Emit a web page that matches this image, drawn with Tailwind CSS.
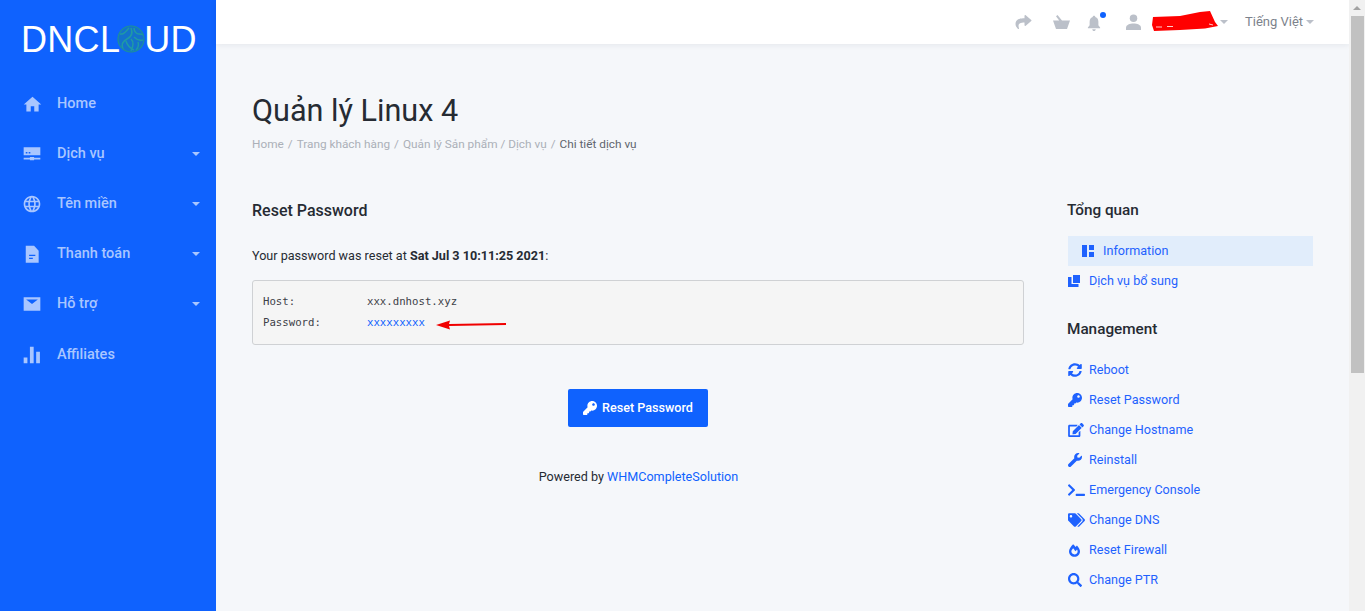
<!DOCTYPE html>
<html lang="vi"><head><meta charset="utf-8"><script src="https://cdn.jsdelivr.net/npm/@tailwindcss/browser@4"></script></head>
<body class="m-0 overflow-hidden">
<div class="flex h-[611px] w-[1365px] overflow-hidden bg-[#f5f7fa] font-['Roboto',sans-serif] text-[12.6px] text-[#262b33]">
  <aside class="w-[216px] shrink-0 bg-[#0f62fe] text-[#a9c6ff]">
    <div class="h-[79px] flex items-start pl-[21px] pt-[19px] text-white text-[36px] leading-[42px] tracking-[0.3px] font-['Liberation_Sans',sans-serif]">
      <span>DNCL</span>
      <svg class="w-[28px] h-[28px] mt-[6px] -ml-[3px] -mr-[1px] shrink-0" viewBox="0 0 28 28" fill="none"><circle cx="14" cy="14" r="13.5" fill="#1472cc"/><path d="M3 9c4 1 6-3 9-6M6 24c-2-5 0-8 4-10s6-6 4-11M14 14c3 3 2 8 0 12M17 3c0 4 3 6 5 6s3 0 4 1M17 12c3 3 6 4 9 3M9 16c1 4 4 7 8 9M21 17c1 3 0 6-2 8" stroke="#1f9aa5" stroke-width="1.5"/><circle cx="14" cy="14" r="13" stroke="#1c8f9f" stroke-width="1.2"/></svg>
      <span>UD</span>
    </div>
    <nav class="text-[14.5px] font-medium">
      <a class="flex items-center h-[50px] pl-[22px] pr-[16px]"><svg class="w-[21px] h-[21px] mr-[14px]" viewBox="0 0 24 24" fill="currentColor"><path d="M10 20v-6h4v6h5v-8h3L12 3 2 12h3v8z"/></svg><span class="flex-1">Home</span></a>
      <a class="flex items-center h-[50px] pl-[22px] pr-[16px]"><svg class="w-[20px] h-[20px] mr-[15px]" viewBox="0 0 24 24" fill="currentColor"><path fill-rule="evenodd" d="M2 4h20v9.500H2zM4.500 9.500v2h2v-2zM8 9.500v2h2v-2zM2 16.500h7.500v-1h5v1H22v2h-7.500v1h-5v-1H2z"/></svg><span class="flex-1">Dịch vụ</span><svg class="w-[8px] h-[4px]" viewBox="0 0 8 4" fill="currentColor"><path d="M0 0h8L4 4z"/></svg></a>
      <a class="flex items-center h-[50px] pl-[22px] pr-[16px]"><svg class="w-[20px] h-[20px] mr-[15px]" viewBox="0 0 24 24" fill="currentColor"><path d="M11.990 2C6.470 2 2 6.480 2 12s4.470 10 9.990 10C17.520 22 22 17.520 22 12S17.520 2 11.990 2zm6.930 6h-2.950c-.32-1.250-.78-2.450-1.380-3.560 1.840.63 3.370 1.910 4.330 3.560zM12 4.040c.83 1.200 1.480 2.530 1.910 3.960h-3.820c.43-1.430 1.080-2.760 1.910-3.960zM4.260 14C4.100 13.360 4 12.690 4 12s.1-1.360.26-2h3.380c-.08.66-.14 1.320-.14 2 0 .68.06 1.340.14 2H4.260zm.82 2h2.950c.32 1.250.78 2.450 1.380 3.560-1.840-.63-3.370-1.900-4.330-3.560zm2.950-8H5.080c.96-1.660 2.490-2.930 4.330-3.560C8.810 5.550 8.350 6.750 8.030 8zM12 19.960c-.83-1.200-1.480-2.530-1.910-3.960h3.820c-.43 1.430-1.080 2.760-1.910 3.960zM14.340 14H9.660c-.09-.66-.16-1.320-.16-2 0-.68.07-1.350.16-2h4.680c.09.65.16 1.320.16 2 0 .68-.07 1.340-.16 2zm.25 5.560c.6-1.110 1.060-2.310 1.380-3.560h2.950c-.96 1.650-2.490 2.930-4.330 3.560zM16.360 14c.08-.66.14-1.320.14-2 0-.68-.06-1.340-.14-2h3.380c.16.64.26 1.310.26 2s-.1 1.360-.26 2h-3.380z"/></svg><span class="flex-1">Tên miền</span><svg class="w-[8px] h-[4px]" viewBox="0 0 8 4" fill="currentColor"><path d="M0 0h8L4 4z"/></svg></a>
      <a class="flex items-center h-[50px] pl-[22px] pr-[16px]"><svg class="w-[20px] h-[20px] mr-[15px]" viewBox="0 0 24 24" fill="currentColor"><path fill-rule="evenodd" d="M4.500 2h10l5.500 6v14.500H4.500zM8.500 13v1.500h7.500V13zM8.500 16.500V18h4.500v-1.500z"/></svg><span class="flex-1">Thanh toán</span><svg class="w-[8px] h-[4px]" viewBox="0 0 8 4" fill="currentColor"><path d="M0 0h8L4 4z"/></svg></a>
      <a class="flex items-center h-[50px] pl-[22px] pr-[16px]"><svg class="w-[20px] h-[20px] mr-[15px]" viewBox="0 0 24 24" fill="currentColor"><path fill-rule="evenodd" d="M2 4h20v16H2zM5 6.500 12 12l7-5.500z"/></svg><span class="flex-1">Hỗ trợ</span><svg class="w-[8px] h-[4px]" viewBox="0 0 8 4" fill="currentColor"><path d="M0 0h8L4 4z"/></svg></a>
      <a class="flex items-center h-[51px] pt-[1px] pl-[22px] pr-[16px]"><svg class="w-[20px] h-[20px] mr-[15px]" viewBox="0 0 24 24" fill="currentColor"><path d="M2 15h4.500v7H2zM9.500 2H14v20H9.500zM17 8h4.500v14H17z"/></svg><span class="flex-1">Affiliates</span></a>
    </nav>
  </aside>
  <div class="w-[1133px] shrink-0 flex flex-col">
    <header class="h-[44px] shrink-0 bg-white shadow-[0_1px_6px_rgba(30,40,60,0.08)] flex items-center text-[#bbc0c9] pl-[799px] text-[13px]">
      <svg class="w-[17px] h-[16px] mr-[21px]" viewBox="0 0 512 512" fill="currentColor"><path d="M503.700 189.800 327.700 37.900C312.300 24.500 288 35.300 288 56v80.100C127.400 137.900 0 170.100 0 322.300c0 61.400 39.600 122.300 83.300 154.100 13.700 9.900 33.100-2.500 28.100-18.600C66.100 312.800 132.900 274.300 288 272.100V360c0 20.700 24.300 31.500 39.700 18.200l176-152c11.100-9.600 11.100-26.800 0-36.400z"/></svg>
      <svg class="w-[17px] h-[16px] mr-[17px]" viewBox="0 0 17 16" fill="currentColor"><path d="M0 6.500h6.200L3 2.200 4.500 1 9 6.500h8L14 15H3z"/></svg>
      <div class="relative mr-[25px] mt-[2px]"><svg class="w-[14px] h-[17px] block" viewBox="0 0 16 18" fill="currentColor"><path d="M8 0c1 0 1.500.7 1.500 1.500C12 2.200 13 4.500 13 7v4l2 2.500v1H1v-1L3 11V7c0-2.500 1-4.800 3.500-5.500C6.500.7 7 0 8 0zM6 15.500h4c0 1.300-1 2-2 2s-2-.7-2-2z"/></svg><span class="absolute -top-[3px] right-[-5px] w-[6px] h-[6px] rounded-full bg-[#0f62fe]"></span></div>
      <svg class="w-[15px] h-[16px] mr-[11px]" viewBox="0 0 16 17" fill="currentColor"><circle cx="8" cy="4.500" r="4"/><path d="M0 17v-2.500C0 11.500 4 10 8 10s8 1.500 8 4.500V17z"/></svg>
      <svg class="w-[66px] h-[23px] mr-[2px]" viewBox="0 0 66 23"><path d="M1 6 28 5 48 1 58 0 63 11 66 15 53 17.500 28 19 2 20 0 14z" fill="#ff0000"/><path d="M4 16h6M15 15.500h6M57 13l4 1" stroke="#fff" stroke-width=".8"/></svg>
      <svg class="w-[8px] h-[4px] mr-[17px]" viewBox="0 0 8 4" fill="currentColor"><path d="M0 0h8L4 4z"/></svg>
      <span class="text-[#7c828c] mr-[3px]">Tiếng Việt</span>
      <svg class="w-[8px] h-[4px]" viewBox="0 0 8 4" fill="currentColor"><path d="M0 0h8L4 4z"/></svg>
    </header>
    <main class="px-[36px] flex-1">
      <h1 class="mt-[49px] text-[30.6px] leading-[36px] font-normal text-[#262b33]">Quản lý Linux 4</h1>
      <div class="mt-[7px] leading-[16px] text-[11.8px] text-[#abb0b8] flex"><span>Home</span><span class="mx-[4px]">/</span><span>Trang khách hàng</span><span class="mx-[4px]">/</span><span>Quản lý Sản phẩm / Dịch vụ</span><span class="mx-[4px]">/</span><span class="text-[#5f656e]">Chi tiết dịch vụ</span></div>
      <div class="flex mt-[48px]">
        <section class="w-[772px] shrink-0 pt-[1px]">
          <h2 class="text-[16px] leading-[20px] font-medium">Reset Password</h2>
          <p class="mt-[25px] leading-[20px]">Your password was reset at <b class="font-bold">Sat Jul 3 10:11:25 2021</b>:</p>
          <div class="mt-[14px] h-[65px] rounded-[3px] border border-[#cfd1d4] bg-[#f5f5f5] pl-[10px] pt-[10px] font-['DejaVu_Sans_Mono',monospace] text-[10.7px] leading-[21px] text-[#3d4148]">
            <div class="flex"><span class="w-[104px]">Host:</span><span>xxx.dnhost.xyz</span></div>
            <div class="flex items-center"><span class="w-[104px]">Password:</span><span class="text-[#0f62fe]">xxxxxxxxx</span>
              <svg class="w-[71px] h-[10px] ml-[11px] mt-[5px]" viewBox="0 0 71 10"><path d="M0 5 14 .5 13 4 70 3V5L13 6l1 3.500z" fill="#f00000"/></svg></div>
          </div>
          <div class="mt-[44px] flex justify-center"><button class="w-[140px] h-[38px] bg-[#0f62fe] text-white rounded-[2px] font-medium flex items-center justify-center"><svg class="w-[14px] h-[14px] mr-[5px]" viewBox="0 0 512 512" fill="currentColor"><path d="M512 176.001C512 273.203 433.202 352 336 352c-11.220 0-22.190-1.062-32.827-3.069l-24.012 27.014A23.999 23.999 0 0 1 261.223 384H224v40c0 13.255-10.745 24-24 24h-40v40c0 13.255-10.745 24-24 24H24c-13.255 0-24-10.745-24-24v-78.059c0-6.365 2.529-12.470 7.029-16.971l161.802-161.802C163.108 213.814 160 195.271 160 176 160 78.798 238.797.001 335.999 0 433.488-.001 512 78.511 512 176.001zM336 128c0 26.510 21.490 48 48 48s48-21.490 48-48-21.490-48-48-48-48 21.490-48 48z"/></svg>Reset Password</button></div>
          <p class="mt-[40px] text-center leading-[20px] pl-[1px]">Powered by <span class="text-[#0f62fe]">WHMCompleteSolution</span></p>
        </section>
        <aside class="ml-[43px] w-[246px] shrink-0 text-[#1f62fe]">
          <h3 class="text-[15.3px] leading-[20px] font-medium text-[#262b33]">Tổng quan</h3>
          <a class="mt-[16px] ml-[1px] h-[30px] bg-[#e1edfb] flex items-center pl-[14px]"><svg class="w-[12px] h-[12px] mr-[9px]" viewBox="0 0 12 12" fill="currentColor"><path d="M0 0h5v12H0zM7 0h5v5H7zM7 7h5v5H7z"/></svg>Information</a>
          <a class="h-[30px] flex items-center"><svg class="w-[12px] h-[12px] mr-[9px] ml-[1px]" viewBox="0 0 12 12" fill="currentColor"><path d="M5 0h7v8H5zM0 2h3.500v7h7V12H0z"/></svg>Dịch vụ bổ sung</a>
          <h3 class="mt-[23px] text-[15.3px] leading-[20px] font-medium text-[#262b33]">Management</h3>
          <div class="mt-[16px]">
            <a class="h-[30px] flex items-center"><span class="w-[22px] shrink-0 pl-[1px]"><svg class="w-[14px] h-[14px] block" viewBox="0 0 512 512" fill="currentColor"><path d="M370.720 133.280C339.458 104.008 298.888 87.962 255.848 88c-77.458.068-144.328 53.178-162.791 126.850-1.344 5.363-6.122 9.150-11.651 9.150H24.103c-7.498 0-13.194-6.807-11.807-14.176C33.933 94.924 134.813 8 256 8c66.448 0 126.791 26.136 171.315 68.685L463.030 40.970C478.149 25.851 504 36.559 504 57.941V192c0 13.255-10.745 24-24 24H345.941c-21.382 0-32.090-25.851-16.971-40.971l41.750-41.749zM32 296h134.059c21.382 0 32.090 25.851 16.971 40.971l-41.750 41.750c31.262 29.273 71.835 45.319 114.876 45.280 77.418-.07 144.315-53.144 162.787-126.849 1.344-5.363 6.122-9.150 11.651-9.150h57.304c7.498 0 13.194 6.807 11.807 14.176C478.067 417.076 377.187 504 256 504c-66.448 0-126.791-26.136-171.315-68.685L48.970 471.030C33.851 486.149 8 475.441 8 454.059V320c0-13.255 10.745-24 24-24z"/></svg></span>Reboot</a>
            <a class="h-[30px] flex items-center"><span class="w-[22px] shrink-0 pl-[1px]"><svg class="w-[14px] h-[14px] block" viewBox="0 0 512 512" fill="currentColor"><path d="M512 176.001C512 273.203 433.202 352 336 352c-11.220 0-22.190-1.062-32.827-3.069l-24.012 27.014A23.999 23.999 0 0 1 261.223 384H224v40c0 13.255-10.745 24-24 24h-40v40c0 13.255-10.745 24-24 24H24c-13.255 0-24-10.745-24-24v-78.059c0-6.365 2.529-12.470 7.029-16.971l161.802-161.802C163.108 213.814 160 195.271 160 176 160 78.798 238.797.001 335.999 0 433.488-.001 512 78.511 512 176.001zM336 128c0 26.510 21.490 48 48 48s48-21.490 48-48-21.490-48-48-48-48 21.490-48 48z"/></svg></span>Reset Password</a>
            <a class="h-[30px] flex items-center"><span class="w-[22px] shrink-0 pl-[1px]"><svg class="w-[16px] h-[14px] block" viewBox="0 0 576 512" fill="currentColor"><path d="M402.600 83.200l90.200 90.200c3.800 3.800 3.800 10 0 13.800L274.400 405.600l-92.800 10.300c-12.400 1.400-22.900-9.100-21.500-21.500l10.300-92.800L388.800 83.200c3.800-3.800 10-3.800 13.800 0zm162-22.900l-48.800-48.800c-15.200-15.200-39.900-15.200-55.200 0l-35.400 35.400c-3.800 3.800-3.800 10 0 13.800l90.200 90.200c3.800 3.800 10 3.800 13.800 0l35.400-35.400c15.200-15.300 15.200-40 0-55.200zM384 346.200V448H64V128h229.800c3.200 0 6.200-1.300 8.500-3.500l40-40c7.600-7.600 2.200-20.500-8.500-20.500H48C21.500 64 0 85.500 0 112v352c0 26.500 21.500 48 48 48h352c26.500 0 48-21.500 48-48V306.200c0-10.700-12.900-16-20.500-8.500l-40 40c-2.200 2.300-3.500 5.300-3.500 8.500z"/></svg></span>Change Hostname</a>
            <a class="h-[30px] flex items-center"><span class="w-[22px] shrink-0 pl-[1px]"><svg class="w-[14px] h-[14px] block" viewBox="0 0 512 512" fill="currentColor"><path d="M507.730 109.100c-2.240-9.030-13.540-12.090-20.120-5.510l-74.360 74.360-67.880-11.310-11.310-67.880 74.360-74.360c6.620-6.620 3.430-17.900-5.660-20.160-47.380-11.740-99.550.91-136.580 37.930-39.640 39.640-50.550 97.100-34.050 147.200L18.740 402.760c-24.990 24.990-24.990 65.510 0 90.500 24.990 24.990 65.510 24.990 90.500 0l213.210-213.210c50.120 16.710 107.470 5.680 147.370-34.220 37.070-37.070 49.700-89.320 37.910-136.730z"/></svg></span>Reinstall</a>
            <a class="h-[30px] flex items-center"><span class="w-[22px] shrink-0 pl-[1px]"><svg class="w-[17px] h-[14px] block" viewBox="0 0 640 512" fill="currentColor"><path d="M257.981 272.971L63.638 467.314c-9.373 9.373-24.569 9.373-33.941 0L7.029 444.647c-9.357-9.357-9.375-24.522-.04-33.901L161.011 256 6.990 101.255c-9.335-9.379-9.317-24.544.04-33.901l22.667-22.667c9.373-9.373 24.569-9.373 33.941 0L257.981 239.030c9.373 9.372 9.373 24.568 0 33.941zM640 456v-32c0-13.255-10.745-24-24-24H312c-13.255 0-24 10.745-24 24v32c0 13.255 10.745 24 24 24h304c13.255 0 24-10.745 24-24z"/></svg></span>Emergency Console</a>
            <a class="h-[30px] flex items-center"><span class="w-[22px] shrink-0 pl-[1px]"><svg class="w-[17px] h-[14px] block" viewBox="0 0 640 512" fill="currentColor"><path d="M497.941 225.941L286.059 14.059A48 48 0 0 0 252.118 0H48C21.490 0 0 21.490 0 48v204.118a48 48 0 0 0 14.059 33.941l211.882 211.882c18.744 18.745 49.136 18.746 67.882 0l204.118-204.118c18.745-18.745 18.745-49.137 0-67.882zM112 160c-26.510 0-48-21.490-48-48s21.490-48 48-48 48 21.490 48 48-21.490 48-48 48zm513.941 133.823L421.823 497.941c-18.745 18.745-49.137 18.745-67.882 0l-.36-.36L527.640 323.522c16.999-16.999 26.360-39.600 26.360-63.640s-9.362-46.641-26.360-63.640L331.397 0h48.721a48 48 0 0 1 33.941 14.059l211.882 211.882c18.745 18.745 18.745 49.137 0 67.882z"/></svg></span>Change DNS</a>
            <a class="h-[30px] flex items-center"><span class="w-[22px] shrink-0 pl-[2px]"><svg class="w-[11px] h-[13px] block" viewBox="0 0 448 512" fill="currentColor"><path d="M323.560 51.200c-20.800 19.300-39.580 39.590-56.220 59.970C240.080 73.620 206.280 35.530 168 0 69.740 91.170 0 209.960 0 281.600 0 408.850 100.290 512 224 512s224-103.150 224-230.400c0-53.270-51.980-163.140-124.440-230.400zm-19.470 340.650C282.430 407.010 255.720 416 226.860 416 154.710 416 96 368.260 96 290.750c0-38.610 24.310-72.630 72.790-130.750 6.930 7.980 98.830 125.340 98.830 125.340l58.630-66.880c4.140 6.850 7.910 13.550 11.270 19.970 27.350 52.190 15.810 118.970-33.430 153.420z"/></svg></span>Reset Firewall</a>
            <a class="h-[30px] flex items-center"><span class="w-[22px] shrink-0 pl-[1px]"><svg class="w-[14px] h-[14px] block" viewBox="0 0 512 512" fill="currentColor"><path d="M505 442.700L405.300 343c-4.500-4.500-10.600-7-17-7H372c27.600-35.300 44-79.700 44-128C416 93.100 322.900 0 208 0S0 93.100 0 208s93.100 208 208 208c48.300 0 92.700-16.400 128-44v16.300c0 6.400 2.500 12.500 7 17l99.700 99.700c9.400 9.400 24.600 9.400 33.900 0l28.300-28.300c9.400-9.400 9.400-24.600.1-34zM208 336c-70.700 0-128-57.200-128-128 0-70.700 57.200-128 128-128 70.700 0 128 57.200 128 128 0 70.700-57.200 128-128 128z"/></svg></span>Change PTR</a>
          </div>
        </aside>
      </div>
    </main>
  </div>
  <div class="w-[16px] shrink-0 bg-[#f1f1f1] flex flex-col items-center">
    <div class="h-[16px] flex items-center"><svg class="w-[8px] h-[4px]" viewBox="0 0 8 4" fill="#a3a3a3"><path d="M0 4h8L4 0z"/></svg></div>
    <div class="w-[13px] h-[357px] bg-[#c1c1c1]"></div>
  </div>
</div>
</body></html>
